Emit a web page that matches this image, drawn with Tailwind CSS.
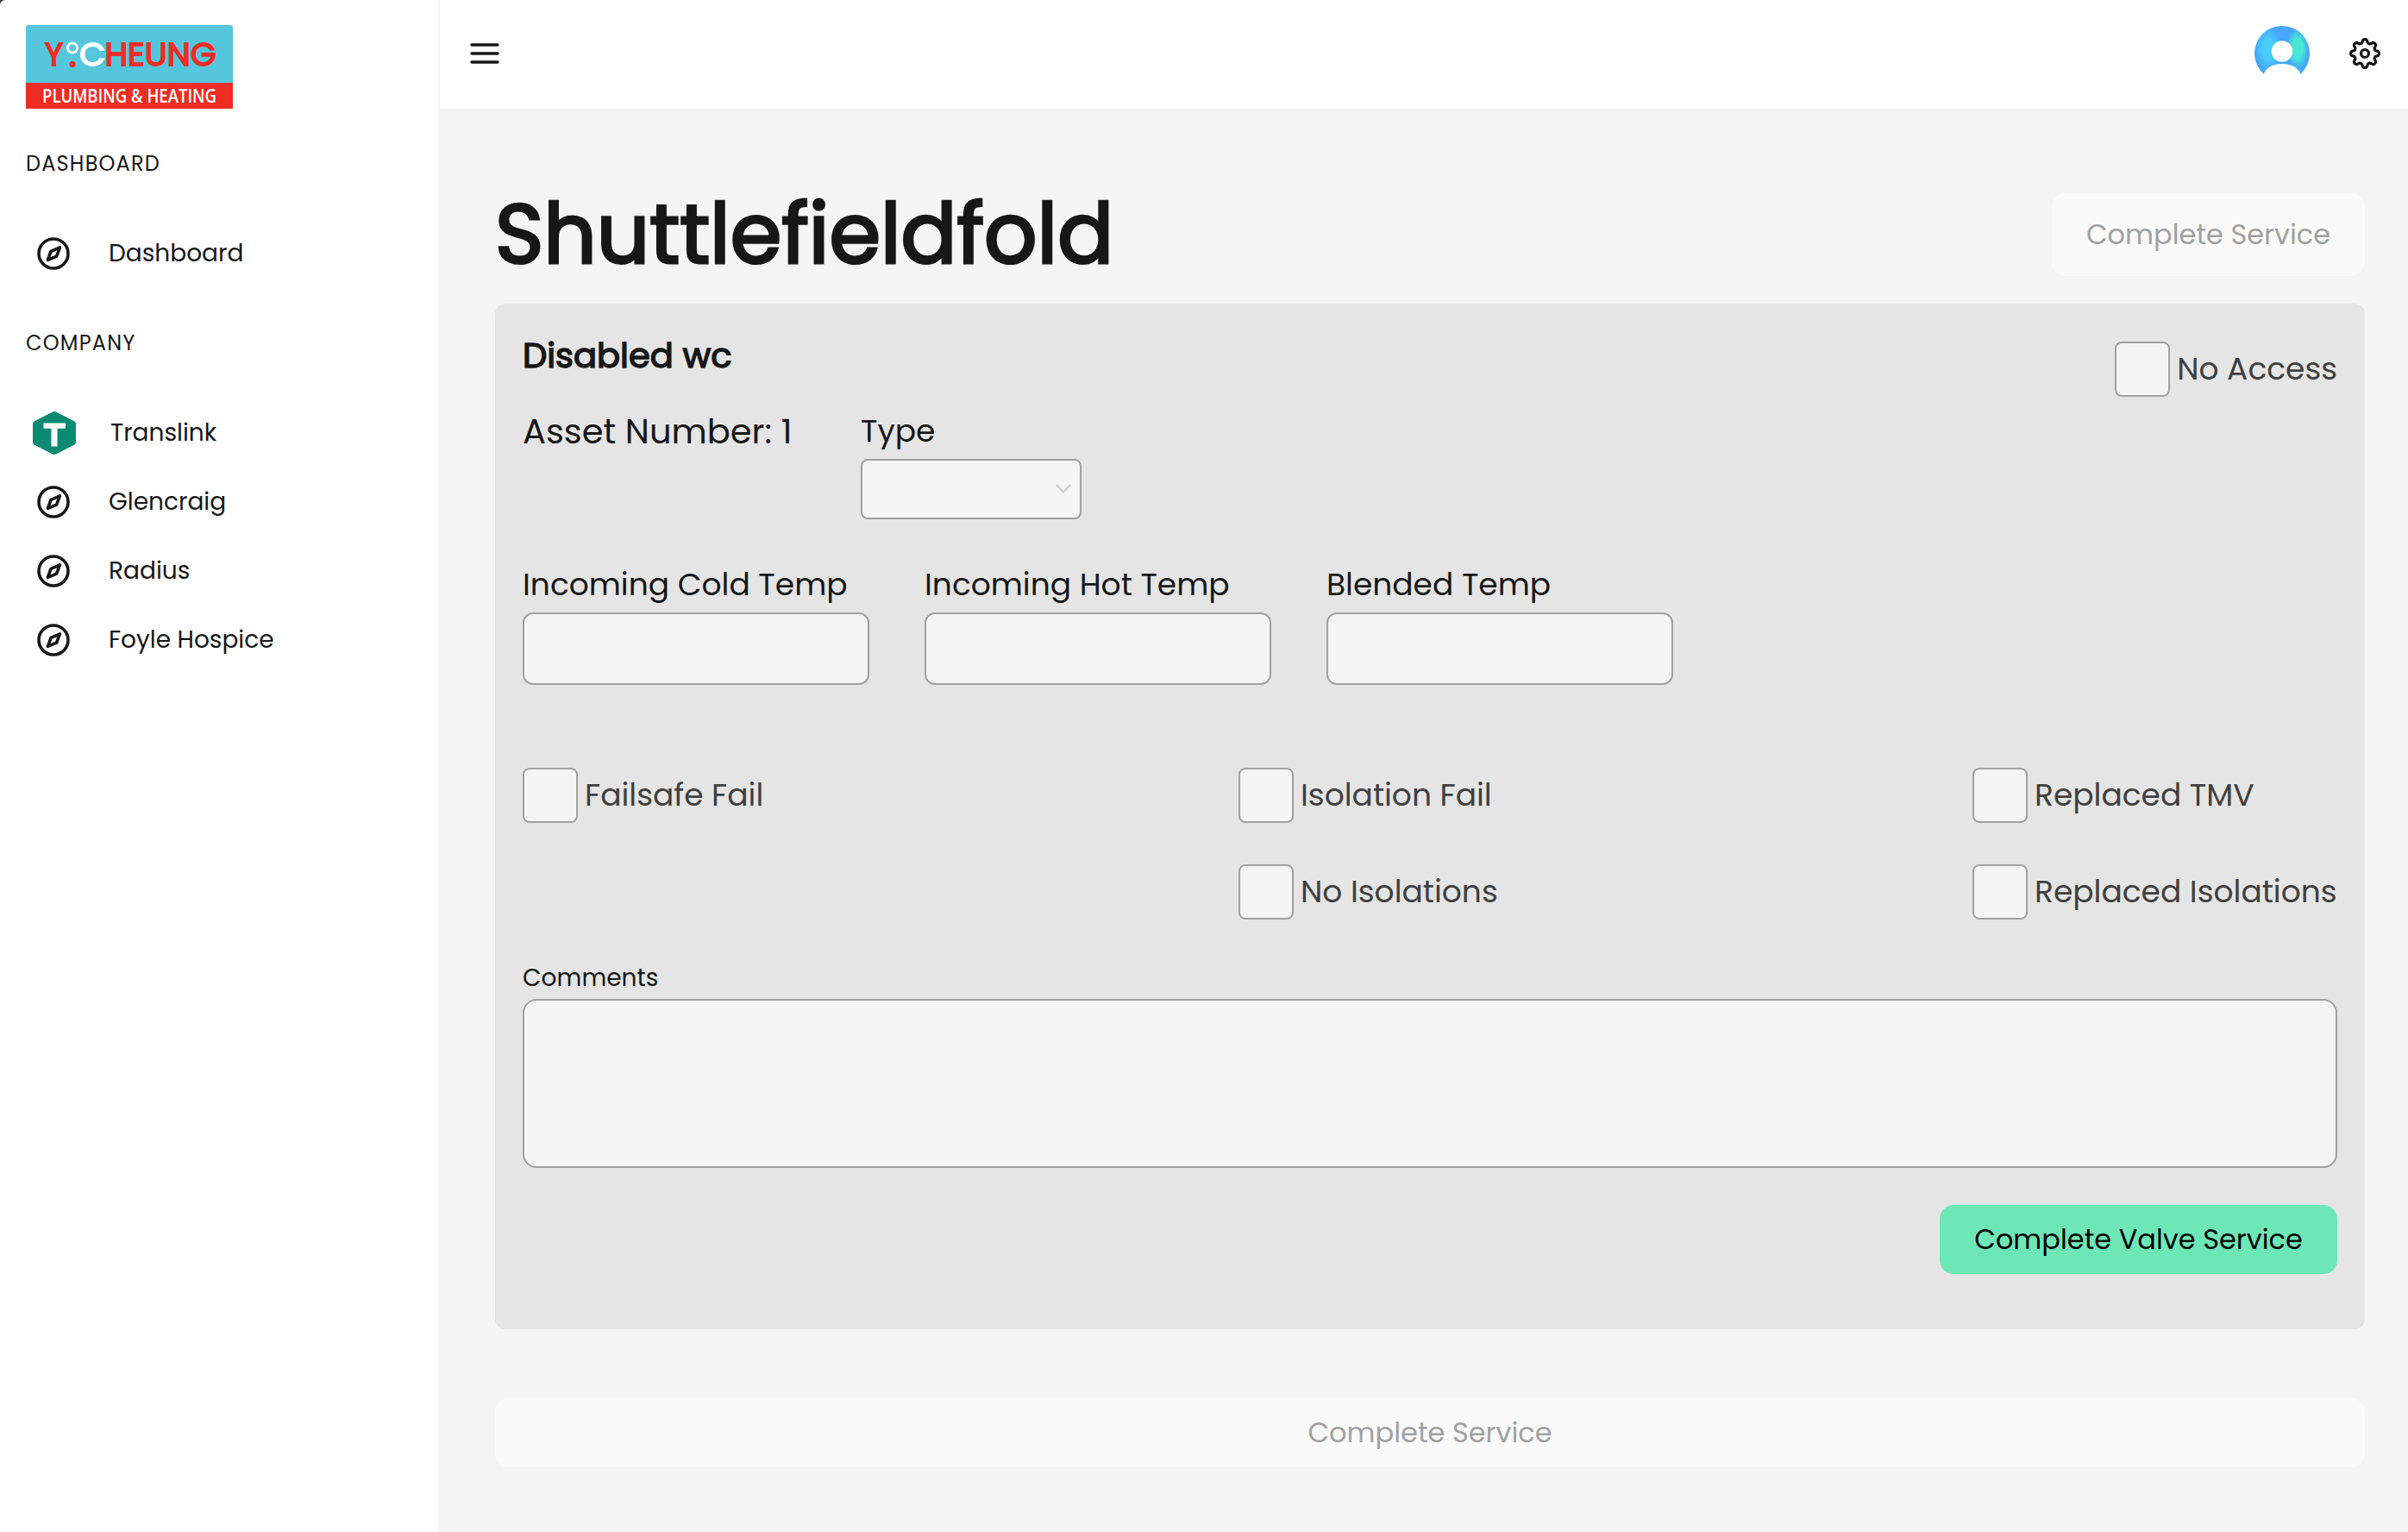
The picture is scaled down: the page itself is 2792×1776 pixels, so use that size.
<!DOCTYPE html>
<html lang="en">
<head>
<meta charset="utf-8">
<title>Shuttlefieldfold</title>
<script src="https://cdn.jsdelivr.net/npm/@tailwindcss/browser@4"></script>
</head>
<body class="flex h-[1776px] w-[2792px] overflow-hidden bg-neutral-700 font-[Poppins,Inter,sans-serif] text-neutral-900">

<svg class="hidden">
  <symbol id="compass" viewBox="0 0 48 48">
    <circle cx="24" cy="24" r="17" fill="none" stroke="currentColor" stroke-width="3.6"/>
    <path d="M31.4 16.8 21 21.4 17.4 31.4 27.6 27.2Z" fill="none" stroke="currentColor" stroke-width="3.6" stroke-linejoin="round"/>
  </symbol>
</svg>

<aside class="w-[510px] shrink-0 rounded-tl-[6px] border-r-2 border-neutral-100 bg-white pt-[29px]">
  <div class="ml-[30px] h-[97px] w-[240px] overflow-hidden rounded-t-[3px]">
    <svg class="block h-[97px] w-[240px]" viewBox="0 0 240 97">
      <rect width="240" height="67" fill="#55c6db"/>
      <rect y="67" width="240" height="30" fill="#ee2c24"/>
      <g font-family="Poppins, Inter, sans-serif" font-size="38" stroke-width="1.8">
        <text x="22" y="47" fill="#ee2c24" stroke="#ee2c24" textLength="21" lengthAdjust="spacingAndGlyphs">Y</text>
        <text x="62" y="47" fill="#fff" stroke="#fff" textLength="30" lengthAdjust="spacingAndGlyphs">C</text>
        <text x="91.5" y="47" fill="#ee2c24" stroke="#ee2c24" textLength="129" lengthAdjust="spacingAndGlyphs">HEUNG</text>
      </g>
      <circle cx="54" cy="26.5" r="5.5" fill="none" stroke="#fff" stroke-width="3"/>
      <circle cx="54" cy="45.5" r="3.5" fill="#ee2c24"/>
      <text x="19" y="90" font-family="Open Sans" font-weight="600" font-size="21" fill="#fff" textLength="202" lengthAdjust="spacingAndGlyphs">PLUMBING &amp; HEATING</text>
    </svg>
  </div>
  <nav>
    <h3 class="mt-11 ml-[30px] text-2xl/10 tracking-wider">DASHBOARD</h3>
    <div class="mt-11 flex h-20 items-center text-[28px]"><svg class="ml-[38px] size-12"><use href="#compass"/></svg><span class="ml-10">Dashboard</span></div>
    <h3 class="mt-11 ml-[30px] text-2xl/10 tracking-wider">COMPANY</h3>
    <div class="mt-11 flex h-20 items-center text-[28px]">
      <svg class="ml-[38px] h-[50px] w-[50px]" viewBox="0 0 50 50">
        <path d="M22.5 .8Q25-.6 27.5 .8L48.500 11.500Q50 12.500 50 14.500V35.500Q50 37.500 48.500 38.500L27.500 49.200Q25 50.600 22.500 49.200L1.500 38.500Q0 37.500 0 35.500V14.500Q0 12.500 1.500 11.500Z" fill="#0b8a73"/>
        <path d="M12.500 13.500H38V19.800H28.500V40.500H21.500V19.800H12.500Z" fill="#fff"/>
      </svg><span class="ml-10">Translink</span></div>
    <div class="flex h-20 items-center text-[28px]"><svg class="ml-[38px] size-12"><use href="#compass"/></svg><span class="ml-10">Glencraig</span></div>
    <div class="flex h-20 items-center text-[28px]"><svg class="ml-[38px] size-12"><use href="#compass"/></svg><span class="ml-10">Radius</span></div>
    <div class="flex h-20 items-center text-[28px]"><svg class="ml-[38px] size-12"><use href="#compass"/></svg><span class="ml-10">Foyle Hospice</span></div>
  </nav>
</aside>

<div class="flex flex-1 flex-col bg-neutral-100">
  <header class="flex h-[126px] shrink-0 items-center justify-between bg-white pr-[26px] pb-0.5 pl-7">
    <svg class="size-12" viewBox="0 0 48 48"><path d="M9 14H39M9 24H39M9 34H39" stroke="#171717" stroke-width="3.500" stroke-linecap="round"/></svg>
    <div class="flex items-center gap-10">
      <svg class="size-16" viewBox="0 0 64 64">
        <defs>
          <radialGradient id="cyan"><stop offset=".45" stop-color="#47cdf9"/><stop offset="1" stop-color="#47cdf9" stop-opacity="0"/></radialGradient>
          <radialGradient id="teal"><stop offset=".45" stop-color="#48e8d4"/><stop offset="1" stop-color="#48e8d4" stop-opacity="0"/></radialGradient>
          <clipPath id="crop"><path d="M10.830 56A32 32 0 1 1 53.170 56Z"/></clipPath>
        </defs>
        <g clip-path="url(#crop)">
          <rect width="64" height="64" fill="#47a6fa"/>
          <ellipse cx="16" cy="27" rx="15" ry="25" fill="url(#cyan)"/>
          <ellipse cx="50" cy="26" rx="13" ry="24" fill="url(#teal)"/>
        </g>
        <circle cx="32" cy="29.500" r="12.200" fill="#fff"/>
        <path d="M10.500 56.500C13 48 22 44 32 44S51 48 53.500 56.500Z" fill="#fff"/>
      </svg>
      <svg class="size-12" viewBox="0 0 24 24" fill="none" stroke="#171717" stroke-width="1.600" stroke-linejoin="round" stroke-linecap="round">
        <circle cx="12" cy="12" r="2.250"/>
        <path id="gear"/>
      </svg>
    </div>
  </header>

  <main class="pt-[98px] pr-[50px] pl-16">
    <div class="flex h-24 items-center justify-between">
      <h1 class="text-8xl [-webkit-text-stroke:3.2px]">Shuttlefieldfold</h1>
      <button class="h-24 w-[363px] rounded-2xl bg-neutral-50 text-[32px] text-neutral-400">Complete Service</button>
    </div>

    <section class="mt-8 rounded-xl bg-neutral-200 px-8 pt-8 pb-16">
      <div class="flex h-[88px] items-start justify-between">
        <h2 class="text-[40px]/14 [-webkit-text-stroke:1.5px]">Disabled wc</h2>
        <label class="mt-3 flex items-center gap-2 text-4xl text-neutral-700"><i class="size-16 rounded-lg border-2 border-neutral-400 bg-neutral-100"></i>No Access</label>
      </div>
      <div class="flex">
        <p class="w-[392px] text-[40px]/14">Asset Number: 1</p>
        <div>
          <p class="text-4xl/14">Type</p>
          <div class="mt-1 flex h-[70px] w-64 items-center justify-end rounded-lg border-2 border-neutral-400 bg-neutral-100 pr-2.5">
            <svg class="h-3 w-[18px]" viewBox="0 0 18 12"><path d="M1.500 1.500 9 9.500 16.500 1.500" fill="none" stroke="#d4d4d4" stroke-width="2.600" stroke-linecap="round" stroke-linejoin="round"/></svg>
          </div>
        </div>
      </div>

      <div class="mt-12 flex gap-16 text-4xl/14">
        <div class="w-[402px]">Incoming Cold Temp<div class="mt-1 h-[84px] rounded-xl border-2 border-neutral-400 bg-neutral-100"></div></div>
        <div class="w-[402px]">Incoming Hot Temp<div class="mt-1 h-[84px] rounded-xl border-2 border-neutral-400 bg-neutral-100"></div></div>
        <div class="w-[402px]">Blended Temp<div class="mt-1 h-[84px] rounded-xl border-2 border-neutral-400 bg-neutral-100"></div></div>
      </div>

      <div class="mt-24 grid h-44 grid-cols-[830px_851px_1fr] grid-rows-[64px_64px] gap-y-12 text-4xl whitespace-nowrap text-neutral-700">
        <label class="flex items-center gap-2"><i class="size-16 rounded-lg border-2 border-neutral-400 bg-neutral-100"></i>Failsafe Fail</label>
        <label class="flex items-center gap-2"><i class="size-16 rounded-lg border-2 border-neutral-400 bg-neutral-100"></i>Isolation Fail</label>
        <label class="flex items-center gap-2"><i class="size-16 rounded-lg border-2 border-neutral-400 bg-neutral-100"></i>Replaced TMV</label>
        <label class="col-start-2 flex items-center gap-2"><i class="size-16 rounded-lg border-2 border-neutral-400 bg-neutral-100"></i>No Isolations</label>
        <label class="flex items-center gap-2"><i class="size-16 rounded-lg border-2 border-neutral-400 bg-neutral-100"></i>Replaced Isolations</label>
      </div>

      <p class="mt-12 text-[28px]/10">Comments</p>
      <div class="mt-1 h-[196px] rounded-2xl border-2 border-neutral-400 bg-neutral-100"></div>
      <div class="mt-[43px] flex justify-end">
        <button class="h-20 w-[461px] rounded-2xl bg-[#6ee7b7] text-[32px] text-black">Complete Valve Service</button>
      </div>
    </section>

    <button class="mt-20 h-20 w-full rounded-2xl bg-neutral-50 text-[32px] text-neutral-400">Complete Service</button>
  </main>
</div>
<script>
  // Eight-lobed cog outline: a smooth radial wave sampled around the centre.
  let d = '';
  for (let i = 0; i < 240; i++) {
    const a = i / 240 * Math.PI * 2, w = Math.cos(8 * a);
    const r = 7.2 + 1.0 * Math.tanh(1.6 * w) / Math.tanh(1.6);
    d += (i ? 'L' : 'M') + (12 + r * Math.cos(a)).toFixed(2) + ' ' + (12 + r * Math.sin(a)).toFixed(2);
  }
  document.getElementById('gear').setAttribute('d', d + 'Z');
</script>
</body>
</html>
